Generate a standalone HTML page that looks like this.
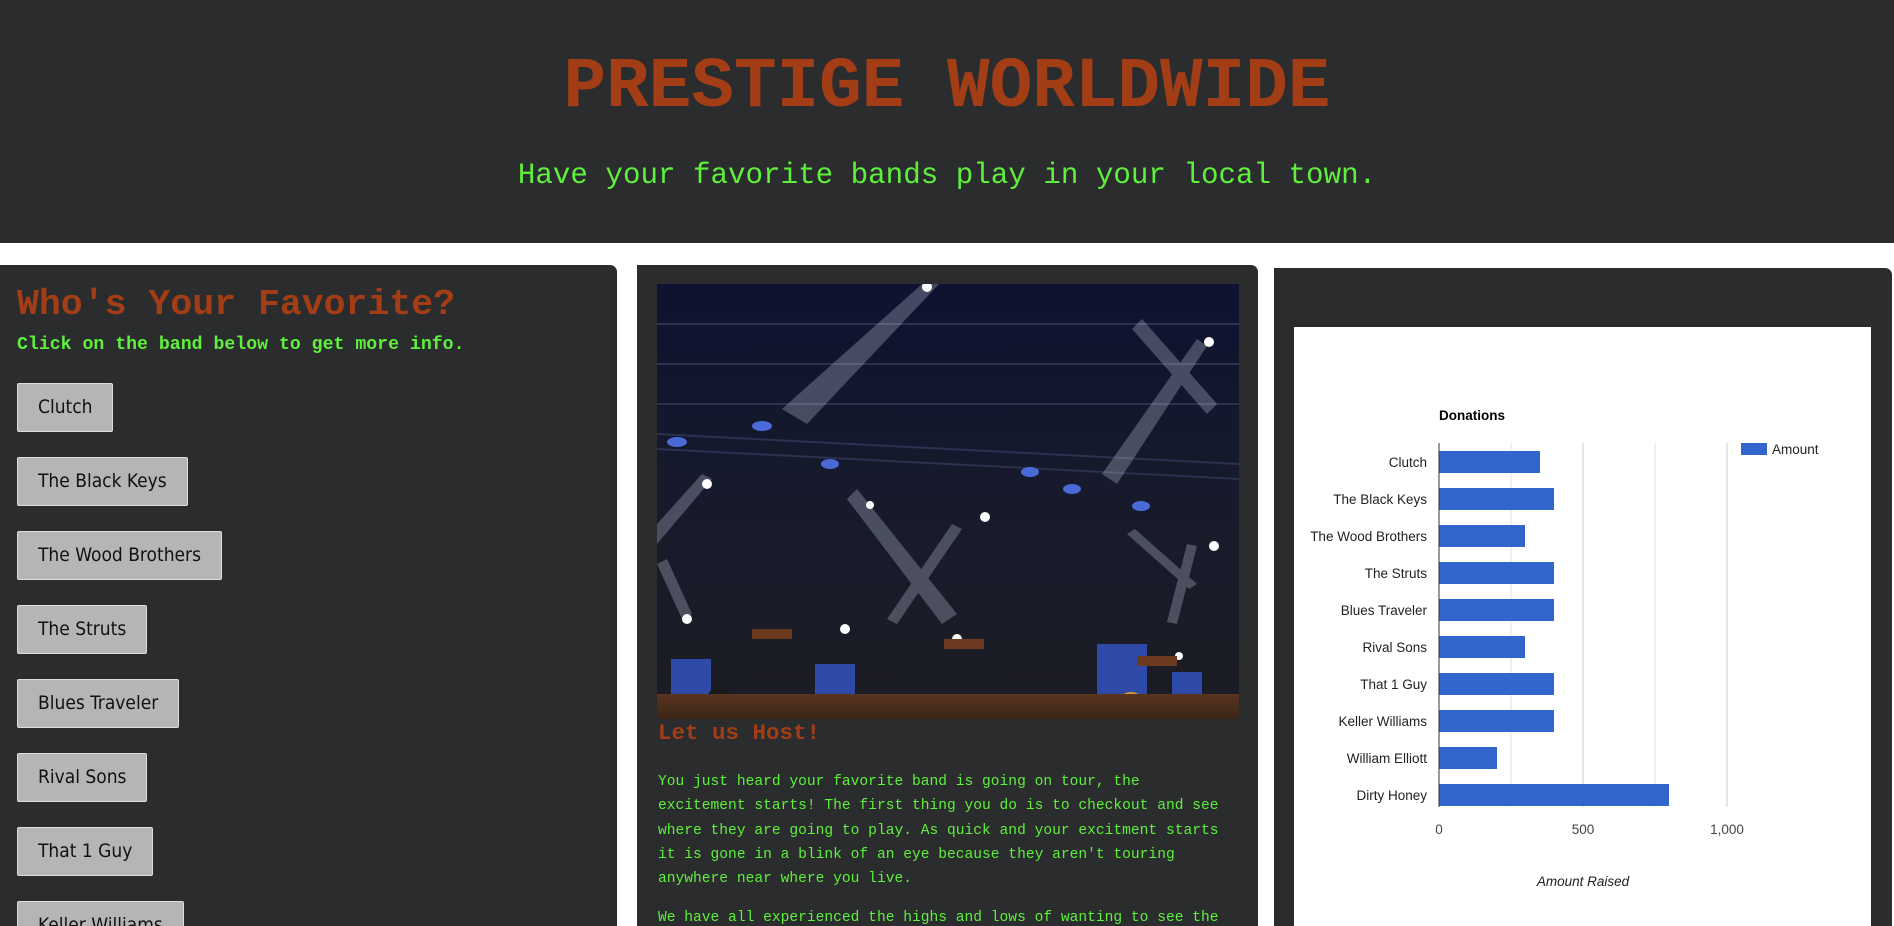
<!DOCTYPE html>
<html><head><meta charset="utf-8"><style>
*{margin:0;padding:0;box-sizing:border-box}
html,body{width:1894px;height:926px;overflow:hidden}
body{background:#fff;position:relative;font-family:"Liberation Mono",monospace}
.hdr{position:absolute;left:0;top:0;width:1894px;height:243px;background:#2b2c2e}
.t1{position:absolute;left:0;width:1894px;top:46px;text-align:center;color:#a23d16;font-size:71px;line-height:84px;font-weight:bold}
.t2{position:absolute;left:0;width:1894px;top:158px;text-align:center;color:#5ef03a;font-size:29.2px;line-height:36px}
.pan{position:absolute;background:#2b2c2e;border-radius:0 7px 0 0}
.h2{position:absolute;left:17px;top:283px;color:#a23d16;font-size:36.5px;font-weight:bold;line-height:44px}
.sub{position:absolute;left:17px;top:334px;color:#5ef03a;font-size:18.2px;font-weight:bold;line-height:22px}
.btn{position:absolute;left:17px;height:49px;background:#b5b5b5;border:1px solid #ddd;border-radius:2px;font-family:"DejaVu Sans Condensed","Liberation Sans",sans-serif;font-size:19px;color:#111;line-height:47px;padding:0 20px}
.h3{position:absolute;left:658px;top:719px;color:#a23d16;font-size:22.5px;font-weight:bold;line-height:28px}
.p{position:absolute;left:658px;color:#5ef03a;font-size:14.6px;line-height:24.3px;white-space:pre}
</style></head><body>
<div class="hdr"></div>
<div class="t1">PRESTIGE WORLDWIDE</div>
<div class="t2">Have your favorite bands play in your local town.</div>

<div class="pan" style="left:0;top:265px;width:617px;height:661px"></div>
<div class="h2">Who's Your Favorite?</div>
<div class="sub">Click on the band below to get more info.</div>
<div class="btn" style="top:383px">Clutch</div>
<div class="btn" style="top:457px">The Black Keys</div>
<div class="btn" style="top:531px">The Wood Brothers</div>
<div class="btn" style="top:605px">The Struts</div>
<div class="btn" style="top:679px">Blues Traveler</div>
<div class="btn" style="top:753px">Rival Sons</div>
<div class="btn" style="top:827px">That 1 Guy</div>
<div class="btn" style="top:901px">Keller Williams</div>

<div class="pan" style="left:637px;top:265px;width:621px;height:661px"></div>
<svg style="position:absolute;left:657px;top:284px" width="582" height="435" viewBox="0 0 582 435">
<defs>
<linearGradient id="bg" x1="0" y1="0" x2="0" y2="1"><stop offset="0" stop-color="#0d1330"/><stop offset="0.45" stop-color="#161a2c"/><stop offset="1" stop-color="#1c1d24"/></linearGradient>
<linearGradient id="fl" x1="0" y1="0" x2="0" y2="1"><stop offset="0" stop-color="#5a3520"/><stop offset="1" stop-color="#3a2415"/></linearGradient>
</defs>
<rect width="582" height="435" fill="url(#bg)"/>
<g stroke="#2a3250" stroke-width="2" fill="none"><path d="M0 40H582M0 80H582M0 120H582M0 150L582 180M0 165L582 195"/></g>
<g fill="#cfd6e8" opacity="0.28">
<polygon points="265,0 282,0 150,140 125,125"/>
<polygon points="190,215 200,205 300,330 285,340"/>
<polygon points="295,240 305,245 240,340 230,335"/>
<polygon points="540,55 550,62 460,200 445,190"/>
<polygon points="475,45 485,35 560,120 550,130"/>
<polygon points="45,190 55,195 0,260 0,240"/>
<polygon points="0,280 10,275 35,330 25,335"/>
<polygon points="470,250 478,245 540,300 532,305"/>
<polygon points="530,260 540,262 520,340 510,338"/>
</g>
<g fill="#fff"><circle cx="270" cy="3" r="5"/><circle cx="552" cy="58" r="5"/><circle cx="50" cy="200" r="5"/><circle cx="213" cy="221" r="4"/><circle cx="328" cy="233" r="5"/><circle cx="30" cy="335" r="5"/><circle cx="188" cy="345" r="5"/><circle cx="300" cy="355" r="5"/><circle cx="557" cy="262" r="5"/><circle cx="522" cy="372" r="4"/></g>
<g fill="#4a6ad8"><ellipse cx="105" cy="142" rx="10" ry="5"/><ellipse cx="20" cy="158" rx="10" ry="5"/><ellipse cx="173" cy="180" rx="9" ry="5"/><ellipse cx="373" cy="188" rx="9" ry="5"/><ellipse cx="415" cy="205" rx="9" ry="5"/><ellipse cx="484" cy="222" rx="9" ry="5"/></g>
<g fill="#2f4aa8"><rect x="14" y="375" width="40" height="45"/><rect x="158" y="380" width="40" height="45"/><rect x="440" y="360" width="50" height="60"/><rect x="515" y="388" width="30" height="35"/></g>
<rect x="5" y="410" width="55" height="32" fill="#b8c0d0"/>
<rect x="305" y="420" width="90" height="50" fill="#2a221d"/>
<g fill="#6b3a1f"><rect x="95" y="345" width="40" height="10"/><rect x="287" y="355" width="40" height="10"/><rect x="480" y="372" width="40" height="10"/></g>
<ellipse cx="63" cy="420" rx="14" ry="18" fill="#1a1a1a"/>
<ellipse cx="255" cy="430" rx="13" ry="17" fill="#d06a20"/>
<ellipse cx="425" cy="428" rx="15" ry="18" fill="#a01818"/>
<ellipse cx="474" cy="428" rx="17" ry="20" fill="#d89a3a"/>
<rect x="0" y="410" width="582" height="25" fill="url(#fl)"/>
</svg>
<div class="h3">Let us Host!</div>
<div class="p" style="top:770px">You just heard your favorite band is going on tour, the
excitement starts! The first thing you do is to checkout and see
where they are going to play. As quick and your excitment starts
it is gone in a blink of an eye because they aren't touring
anywhere near where you live.</div>
<div class="p" style="top:906px">We have all experienced the highs and lows of wanting to see the</div>

<div class="pan" style="left:1274px;top:268px;width:618px;height:658px"></div>
<svg style="position:absolute;left:1294px;top:327px" width="577" height="599" viewBox="1294 327 577 599" font-family="Liberation Sans, Arial, sans-serif">
<rect x="1294" y="327" width="577" height="620" fill="#fff"/>
<text x="1439" y="420" font-size="13.5" font-weight="bold" fill="#000">Donations</text>
<g stroke="#e0e0e0"><line x1="1511" y1="443" x2="1511" y2="807"/><line x1="1655" y1="443" x2="1655" y2="807"/></g>
<g stroke="#ccc"><line x1="1583" y1="443" x2="1583" y2="807"/><line x1="1727" y1="443" x2="1727" y2="807"/></g>
<g fill="#3366cc">
<rect x="1439" y="451" width="101" height="22"/>
<rect x="1439" y="488" width="115" height="22"/>
<rect x="1439" y="525" width="86" height="22"/>
<rect x="1439" y="562" width="115" height="22"/>
<rect x="1439" y="599" width="115" height="22"/>
<rect x="1439" y="636" width="86" height="22"/>
<rect x="1439" y="673" width="115" height="22"/>
<rect x="1439" y="710" width="115" height="22"/>
<rect x="1439" y="747" width="58" height="22"/>
<rect x="1439" y="784" width="230" height="22"/>
<rect x="1741" y="443" width="26" height="12"/>
</g>
<line x1="1439" y1="443" x2="1439" y2="807" stroke="#333"/>
<g font-size="13.5" fill="#222" text-anchor="end">
<text x="1427" y="467">Clutch</text>
<text x="1427" y="504">The Black Keys</text>
<text x="1427" y="541">The Wood Brothers</text>
<text x="1427" y="578">The Struts</text>
<text x="1427" y="615">Blues Traveler</text>
<text x="1427" y="652">Rival Sons</text>
<text x="1427" y="689">That 1 Guy</text>
<text x="1427" y="726">Keller Williams</text>
<text x="1427" y="763">William Elliott</text>
<text x="1427" y="800">Dirty Honey</text>
</g>
<text x="1772" y="454" font-size="13.5" fill="#222">Amount</text>
<g font-size="13.5" fill="#444" text-anchor="middle"><text x="1439" y="834">0</text><text x="1583" y="834">500</text><text x="1727" y="834">1,000</text></g>
<text x="1583" y="886" font-size="13.5" font-style="italic" fill="#222" text-anchor="middle">Amount Raised</text>
</svg>
</body></html>
